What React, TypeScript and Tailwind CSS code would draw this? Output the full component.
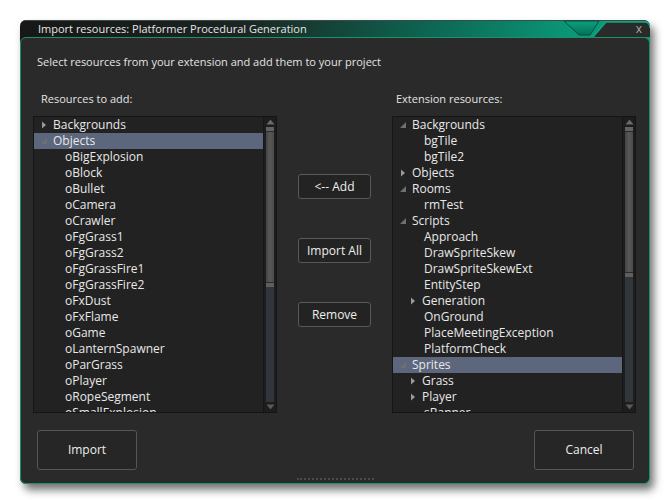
import React from "react";

type Kind = "open" | "closed" | "leaf";
type Item = { label: string; level: 0 | 1; kind: Kind; selected?: boolean };

const leftItems: Item[] = [
  { label: "Backgrounds", level: 0, kind: "closed" },
  { label: "Objects", level: 0, kind: "open", selected: true },
  ...[
    "oBigExplosion",
    "oBlock",
    "oBullet",
    "oCamera",
    "oCrawler",
    "oFgGrass1",
    "oFgGrass2",
    "oFgGrassFire1",
    "oFgGrassFire2",
    "oFxDust",
    "oFxFlame",
    "oGame",
    "oLanternSpawner",
    "oParGrass",
    "oPlayer",
    "oRopeSegment",
    "oSmallExplosion",
  ].map((label) => ({ label, level: 1 as const, kind: "leaf" as const })),
];

const rightItems: Item[] = [
  { label: "Backgrounds", level: 0, kind: "open" },
  { label: "bgTile", level: 1, kind: "leaf" },
  { label: "bgTile2", level: 1, kind: "leaf" },
  { label: "Objects", level: 0, kind: "closed" },
  { label: "Rooms", level: 0, kind: "open" },
  { label: "rmTest", level: 1, kind: "leaf" },
  { label: "Scripts", level: 0, kind: "open" },
  { label: "Approach", level: 1, kind: "leaf" },
  { label: "DrawSpriteSkew", level: 1, kind: "leaf" },
  { label: "DrawSpriteSkewExt", level: 1, kind: "leaf" },
  { label: "EntityStep", level: 1, kind: "leaf" },
  { label: "Generation", level: 1, kind: "closed" },
  { label: "OnGround", level: 1, kind: "leaf" },
  { label: "PlaceMeetingException", level: 1, kind: "leaf" },
  { label: "PlatformCheck", level: 1, kind: "leaf" },
  { label: "Sprites", level: 0, kind: "open", selected: true },
  { label: "Grass", level: 1, kind: "closed" },
  { label: "Player", level: 1, kind: "closed" },
  { label: "sBanner", level: 1, kind: "leaf" },
];

function Arrow({ kind }: { kind: Kind }) {
  if (kind === "closed") {
    return (
      <svg width="12" height="16" viewBox="0 0 12 16" className="shrink-0">
        <polygon points="1,4.5 5,8 1,11.5" fill="#9a9a9a" />
      </svg>
    );
  }
  return (
    <svg width="12" height="16" viewBox="0 0 12 16" className="shrink-0">
      <polygon points="6,5 6,11 0,11" fill="#6f6f6f" />
    </svg>
  );
}

function Row({ item }: { item: Item }) {
  let indent = "pl-[31px]";
  if (item.kind !== "leaf") indent = item.level === 0 ? "pl-[7px]" : "pl-[17px]";
  return (
    <div
      className={`h-[16px] flex items-center whitespace-nowrap text-[12px] leading-[16px] text-[#e8e8e8] ${indent} ${
        item.selected ? "bg-[#5c667c]" : ""
      }`}
    >
      {item.kind !== "leaf" && <Arrow kind={item.kind} />}
      <span>{item.label}</span>
    </div>
  );
}

function ScrollBar({ thumb }: { thumb: string }) {
  return (
    <div className="w-[13px] shrink-0 flex flex-col bg-[#1d1d1d] border-l border-[#161616]">
      <div className="h-[10px] flex items-center justify-center">
        <svg width="9" height="6" viewBox="0 0 9 6">
          <polygon points="4.5,0.5 8.5,5.5 0.5,5.5" fill="#6a6a6a" />
        </svg>
      </div>
      <div className={`${thumb} mx-[2px] flex flex-col`}>
        <div className="h-[4px] bg-[#626262]" />
        <div className="h-[1px] bg-[#2a2a2a]" />
        <div className="flex-1 bg-[linear-gradient(90deg,#444_0%,#585858_50%,#4a4a4a_100%)]" />
        <div className="h-[1px] bg-[#2a2a2a]" />
        <div className="h-[4px] bg-[#5e5e5e]" />
      </div>
      <div className="flex-1 mx-[2px] bg-[#30363b]" />
      <div className="h-[10px] flex items-center justify-center">
        <svg width="9" height="6" viewBox="0 0 9 6">
          <polygon points="0.5,0.5 8.5,0.5 4.5,5.5" fill="#5a5a5a" />
        </svg>
      </div>
    </div>
  );
}

function TreeList({ items, thumb }: { items: Item[]; thumb: string }) {
  return (
    <div className="w-[244px] h-[297px] shrink-0 flex border border-[#151515] bg-[#222222]">
      <div className="flex-1 overflow-hidden">
        {items.map((item, i) => (
          <Row key={i} item={item} />
        ))}
      </div>
      <ScrollBar thumb={thumb} />
    </div>
  );
}

function SmallButton({ children }: { children: React.ReactNode }) {
  return (
    <button className="w-[73px] h-[25px] rounded-[3px] border border-[#595959] bg-[#232323] text-[12px] text-[#eeeeee] flex items-center justify-center">
      {children}
    </button>
  );
}

function BigButton({ children }: { children: React.ReactNode }) {
  return (
    <button className="w-[100px] h-[40px] rounded-[3px] border border-[#565656] bg-[#262626] text-[12px] text-[#eeeeee] flex items-center justify-center">
      {children}
    </button>
  );
}

export default function App() {
  return (
    <div className="min-h-screen bg-white pt-[20px] pl-[20px] font-['Open_Sans',sans-serif]">
      <div className="w-[630px] rounded-[6px] bg-[linear-gradient(90deg,#171717_0%,#1b2422_35%,#0d6652_65%,#0a9878_88%,#0a9c7a_100%)] shadow-[4px_6px_8px_rgba(0,0,0,0.55)]">
        {/* Title bar */}
        <div className="relative h-[17px] rounded-t-[6px] flex items-center pl-[18px] border-t border-[#3a4a46]">
          <span className="text-[11px] leading-[16px] text-[#e6e6e6]">
            Import resources: Platformer Procedural Generation
          </span>
          <svg
            width="89"
            height="17"
            viewBox="0 0 89 17"
            className="absolute right-0 top-[-1px]"
          >
            <defs>
              <linearGradient id="notch" x1="0" y1="0" x2="0" y2="1">
                <stop offset="0" stopColor="#0aa07c" />
                <stop offset="1" stopColor="#07705a" />
              </linearGradient>
            </defs>
            <polygon points="3,1 38,1 29,15 18,15" fill="url(#notch)" stroke="#064c3e" strokeWidth="1" />
            <path d="M32 17 L45 2 L83 2 Q89 2 89 8 L89 17 Z" fill="#2a2a2a" />
            <path d="M32 17 L45 2 L83 2 Q89 2 89 8" fill="none" stroke="#10a57e" strokeWidth="1.5" />
          </svg>
          <span className="absolute right-[8px] top-[0px] text-[12px] leading-[16px] text-[#a8a8a8]">x</span>
        </div>

        {/* Body */}
        <div className="h-[447px] rounded-[6px] border border-[#1a9466] bg-[#2a2a2a] px-[12px] pt-[16px] flex flex-col">
          <div className="pl-[4px] text-[11px] leading-[16px] text-[#e4e4e4]">
            Select resources from your extension and add them to your project
          </div>

          <div className="mt-[21px] flex text-[11px] leading-[16px] text-[#e4e4e4]">
            <div className="w-[244px] pl-[8px]">Resources to add:</div>
            <div className="w-[115px]" />
            <div className="w-[244px] pl-[4px]">Extension resources:</div>
          </div>

          <div className="mt-[9px] flex gap-[21px]">
            <TreeList items={leftItems} thumb="h-[160px]" />
            <div className="w-[73px] shrink-0 flex flex-col pt-[58px] gap-[39px]">
              <SmallButton>{"<-- Add"}</SmallButton>
              <SmallButton>Import All</SmallButton>
              <SmallButton>Remove</SmallButton>
            </div>
            <TreeList items={rightItems} thumb="h-[150px]" />
          </div>

          <div className="mt-[17px] flex justify-between pl-[4px] pr-[3px]">
            <BigButton>Import</BigButton>
            <BigButton>Cancel</BigButton>
          </div>

          <div className="mt-[8px] flex justify-center">
            <div className="w-[77px] border-t-2 border-dotted border-[#4a4a4a]" />
          </div>
        </div>
      </div>
    </div>
  );
}
